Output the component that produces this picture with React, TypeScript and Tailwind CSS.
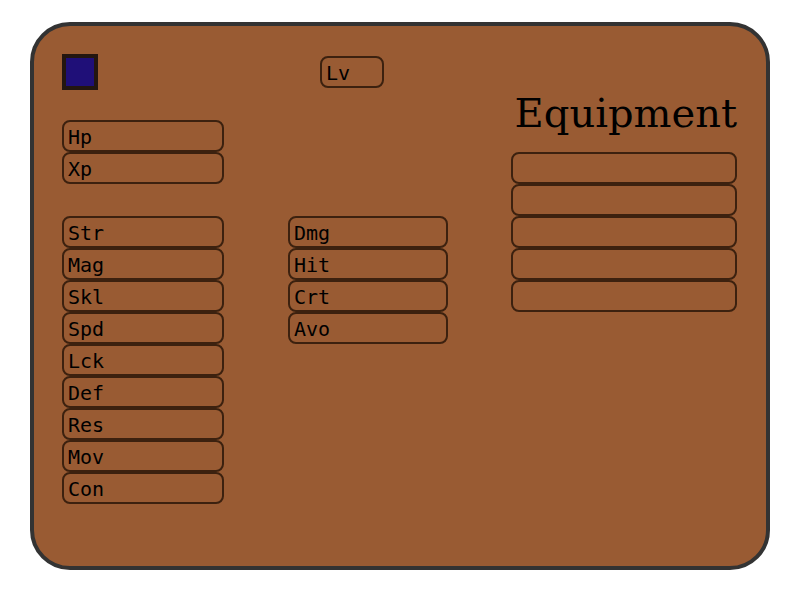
const mono = { fontFamily: '"DejaVu Sans Mono", "Liberation Mono", monospace' };

const stats = ["Str", "Mag", "Skl", "Spd", "Lck", "Def", "Res", "Mov", "Con"];
const combat = ["Dmg", "Hit", "Crt", "Avo"];

function StatBox({ label, className = "" }: { label?: string; className?: string }) {
  return (
    <div
      className={`h-[32px] flex items-center pl-[4px] pt-[1px] border-2 border-[#3c210f] rounded-[8px] text-[20px] leading-none text-black ${className}`}
      style={mono}
    >
      {label}
    </div>
  );
}

export default function App() {
  return (
    <div className="w-[800px] h-[600px] bg-white pt-[22px] pl-[30px]">
      <div className="w-[740px] h-[548px] bg-[#995b33] border-4 border-[#333333] rounded-[40px] flex pt-[28px] pl-[28px]">
        {/* left column */}
        <div className="flex flex-col w-[162px]">
          <div className="w-[36px] h-[36px] bg-[#1f0f78] border-4 border-[#231610]" />
          <div className="flex flex-col mt-[30px]">
            <StatBox label="Hp" />
            <StatBox label="Xp" />
          </div>
          <div className="flex flex-col mt-[32px]">
            {stats.map((s) => (
              <StatBox key={s} label={s} />
            ))}
          </div>
        </div>

        {/* middle column */}
        <div className="flex flex-col w-[160px] ml-[64px]">
          <StatBox label="Lv" className="w-[64px] ml-[32px] mt-[2px]" />
          <div className="flex flex-col mt-[128px]">
            {combat.map((s) => (
              <StatBox key={s} label={s} />
            ))}
          </div>
        </div>

        {/* equipment column */}
        <div className="flex flex-col w-[226px] ml-[63px]">
          <div
            className="mt-[35px] text-right text-[40px] leading-[48px] text-black"
            style={{ fontFamily: '"DejaVu Serif", "Liberation Serif", serif' }}
          >
            Equipment
          </div>
          <div className="flex flex-col mt-[15px]">
            {[0, 1, 2, 3, 4].map((i) => (
              <StatBox key={i} />
            ))}
          </div>
        </div>
      </div>
    </div>
  );
}
